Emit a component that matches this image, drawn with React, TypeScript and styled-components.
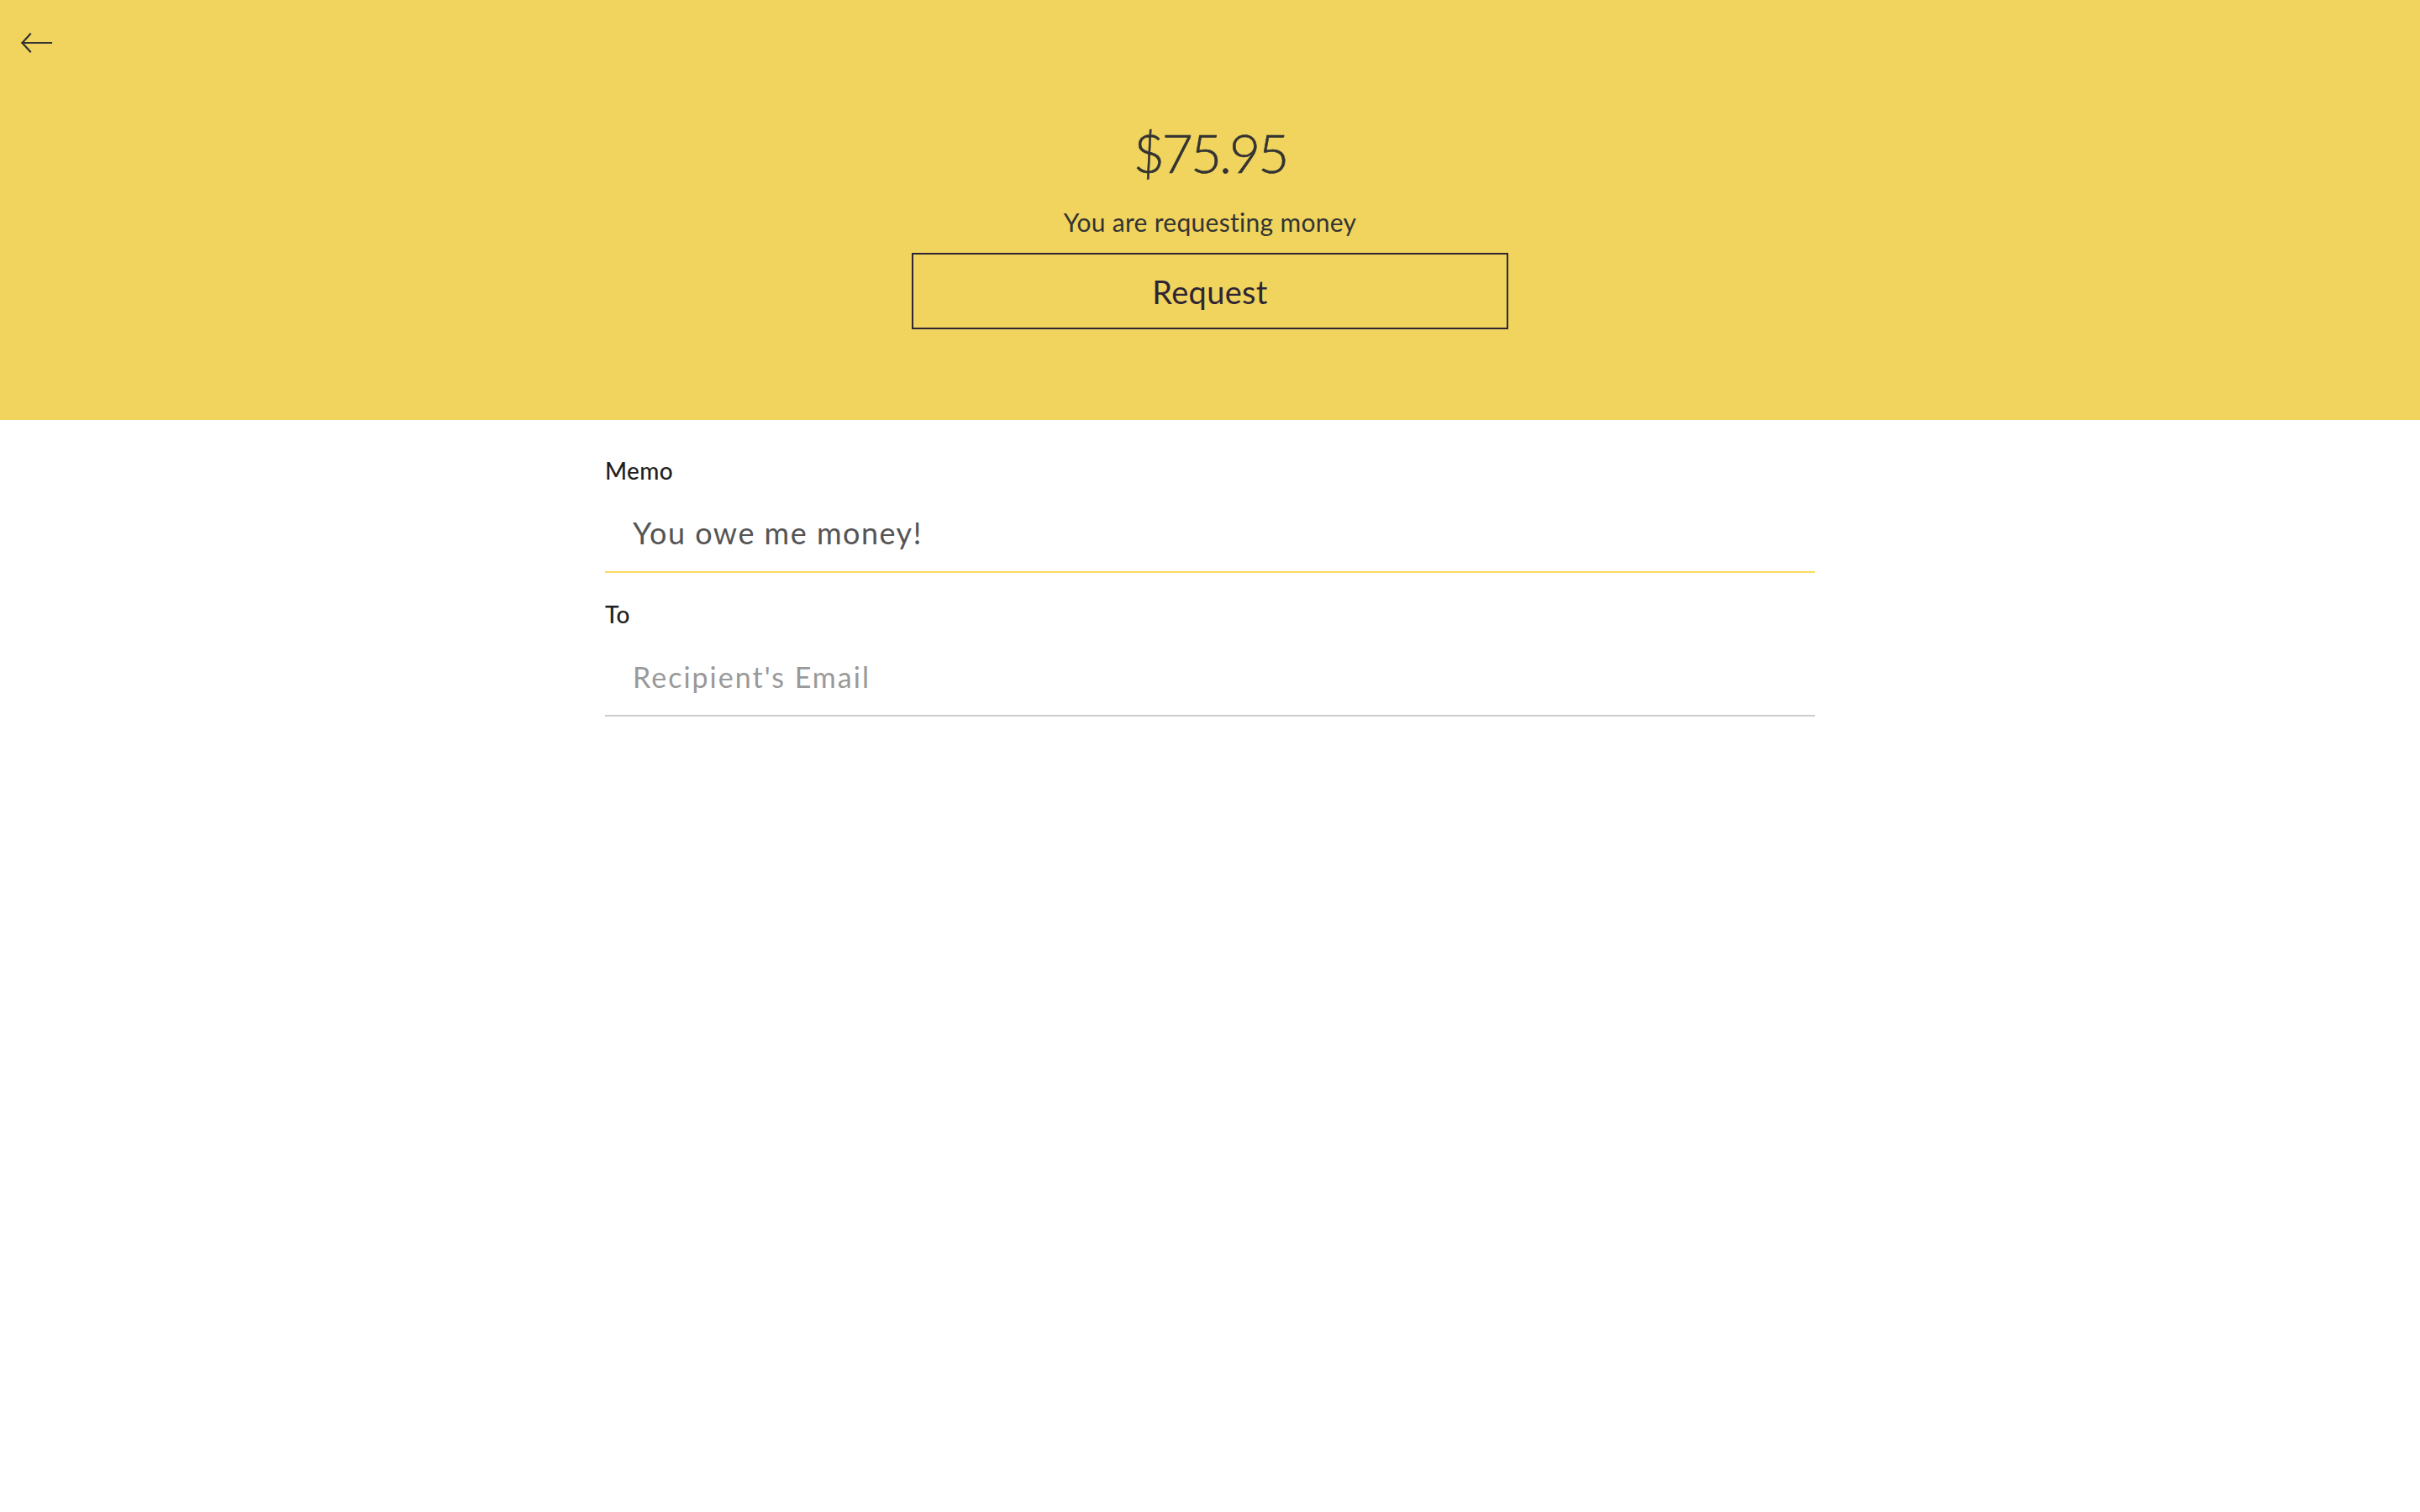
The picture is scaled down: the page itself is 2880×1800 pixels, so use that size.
import React from "react";
import styled, { createGlobalStyle } from "styled-components";

const GlobalStyle = createGlobalStyle`
  html, body {
    margin: 0;
    padding: 0;
    background: #ffffff;
    font-family: Lato, "Open Sans", sans-serif;
  }
  * { box-sizing: border-box; }
`;

const Page = styled.div`
  display: flex;
  flex-direction: column;
  min-height: 1800px;
  background: #ffffff;
`;

const Header = styled.header`
  height: 500px;
  background: #f0d45e;
  display: flex;
  flex-direction: column;
  align-items: center;
  padding-top: 39px;
`;

const BackButton = styled.button`
  align-self: flex-start;
  margin-left: 25px;
  width: 38px;
  height: 24px;
  padding: 0;
  border: none;
  background: transparent;
  color: #333333;
  cursor: pointer;
  display: flex;
  align-items: center;
  justify-content: center;
`;

const Amount = styled.div`
  margin-top: 87px;
  font-size: 64px;
  line-height: 64px;
  font-weight: 300;
  letter-spacing: -3px;
  color: #333333;
  -webkit-text-stroke: 0.6px #333333;
`;

const Subtitle = styled.div`
  margin-top: 35px;
  font-size: 30px;
  line-height: 30px;
  letter-spacing: 0.3px;
  color: #333333;
`;

const OutlineButton = styled.button`
  margin-top: 22px;
  width: 710px;
  height: 91px;
  border: 2px solid #2e2434;
  background: transparent;
  color: #2e2434;
  font-family: Lato, "Open Sans", sans-serif;
  font-size: 38px;
  letter-spacing: 0.3px;
  cursor: pointer;
`;

const Form = styled.form`
  width: 1440px;
  margin: 0 auto;
  padding-top: 46px;
  display: flex;
  flex-direction: column;
`;

const Field = styled.div<{ $gap?: number }>`
  display: flex;
  flex-direction: column;
  margin-top: ${(p) => p.$gap ?? 0}px;
`;

const Label = styled.label`
  font-size: 28px;
  line-height: 28px;
  font-weight: 500;
  letter-spacing: 0.4px;
  color: #1f1f1f;
`;

const Input = styled.input<{ $active?: boolean }>`
  display: block;
  width: 100%;
  margin-top: 28px;
  height: 80px;
  padding: 14px 0 28px 33px;
  border: none;
  border-bottom: 2px solid ${(p) => (p.$active ? "#fcdb5f" : "#cccccc")};
  outline: none;
  background: transparent;
  font-family: Lato, "Open Sans", sans-serif;
  font-size: 36px;
  line-height: 36px;
  letter-spacing: 1.5px;
  color: #555555;

  &::placeholder {
    color: #999999;
    font-size: 34px;
    letter-spacing: 2px;
  }
`;

const BackArrow = () => (
  <svg width="38" height="24" viewBox="0 0 38 24" fill="none" stroke="currentColor" strokeWidth="2.2" strokeLinecap="square">
    <polyline points="11,1.5 1.5,12 11,22.5" />
    <line x1="1.5" y1="12" x2="36" y2="12" />
  </svg>
);

export default function App() {
  return (
    <Page>
      <GlobalStyle />
      <Header>
        <BackButton aria-label="Back">
          <BackArrow />
        </BackButton>
        <Amount>$75.95</Amount>
        <Subtitle>You are requesting money</Subtitle>
        <OutlineButton type="button">Request</OutlineButton>
      </Header>
      <Form onSubmit={(e) => e.preventDefault()}>
        <Field>
          <Label htmlFor="memo">Memo</Label>
          <Input id="memo" $active defaultValue="You owe me money!" />
        </Field>
        <Field $gap={35}>
          <Label htmlFor="to">To</Label>
          <Input id="to" placeholder="Recipient's Email" />
        </Field>
      </Form>
    </Page>
  );
}
